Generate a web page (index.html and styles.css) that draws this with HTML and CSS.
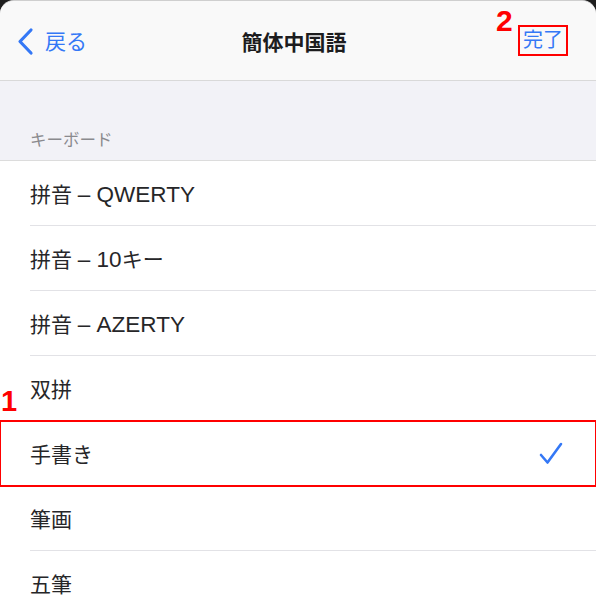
FILE: index.html
```html
<!DOCTYPE html>
<html lang="ja">
<head>
  <meta charset="UTF-8" />
  <title>簡体中国語</title>
  <link rel="stylesheet" href="styles.css">
</head>
<body>
  <!-- Sheet with rounded top corners -->
  <div class="sheet">
    <!-- Navigation bar -->
    <div class="navbar">
      <a class="nav-back">
        <svg class="chevron" width="20" height="30" viewBox="0 0 20 30">
          <polyline points="15,4 4,15.5 15,27" fill="none" stroke="#3478f6" stroke-width="3.2" stroke-linecap="round" stroke-linejoin="round"/>
        </svg>
        <span>戻る</span>
      </a>
      <div class="nav-title">簡体中国語</div>
      <div class="nav-right">
        <a class="nav-done">完了</a>
      </div>
      <span class="step step-2">2</span>
    </div>

    <!-- Section header -->
    <div class="section-header">キーボード</div>

    <!-- Keyboard list -->
    <div class="list">
      <div class="row"><div class="row-inner"><span>拼音 <span class="latin">– QWERTY</span></span></div></div>
      <div class="row"><div class="row-inner"><span>拼音 <span class="latin">– 10</span>キー</span></div></div>
      <div class="row"><div class="row-inner"><span>拼音 <span class="latin">– AZERTY</span></span></div></div>
      <div class="row"><div class="row-inner">双拼</div></div>
      <div class="row selected">
        <span class="step step-1">1</span>
        <div class="row-inner">
          <span>手書き</span>
          <svg class="check" width="26" height="26" viewBox="0 0 26 26">
            <polyline points="3,14 9.5,21.5 23,3" fill="none" stroke="#3478f6" stroke-width="2.6" stroke-linecap="round" stroke-linejoin="round"/>
          </svg>
        </div>
      </div>
      <div class="row"><div class="row-inner">筆画</div></div>
      <div class="row"><div class="row-inner">五筆</div></div>
    </div>
  </div>
</body>
</html>
```

FILE: styles.css
```css
/* Dark backdrop behind the sheet */
body {
  margin: 0;
  background: #1e1e1e;
  font-family: "Liberation Sans", "Noto Sans CJK JP", sans-serif;
  width: 596px;
  height: 610px;
  overflow: hidden;
}

/* Sheet card */
.sheet {
  background: #f2f2f7;
  border-radius: 14px 14px 0 0;
  height: 610px;
  overflow: hidden;
  position: relative;
  border-top: 1px solid #cfcfcf;
  box-sizing: border-box;
}

/* Top navigation */
.navbar {
  height: 79px;
  background: #f9f9f9;
  border-bottom: 1px solid #d9d9d9;
  display: flex;
  align-items: center;
  justify-content: space-between;
  padding: 0 28px 0 16px;
  position: relative;
}

.nav-back {
  display: flex;
  align-items: center;
  gap: 9px;
  color: #3478f6;
  font-size: 21px;
  width: 150px;
}

.nav-back span {
  margin-top: -1px;
}

.nav-title {
  font-size: 21px;
  font-weight: bold;
  color: #1c1c1e;
  margin-left: 4px;
}

.nav-right {
  width: 150px;
  display: flex;
  justify-content: flex-end;
}

/* Done button, boxed in red as annotation */
.nav-done {
  color: #3478f6;
  font-size: 20px;
  line-height: 27px;
  padding: 0 3px;
  border: 2px solid #f00;
  margin-top: -1px;
}

/* Red step numbers */
.step {
  position: absolute;
  color: #f00;
  font-family: "Liberation Sans", Arial, sans-serif;
  font-weight: bold;
  font-size: 30px;
  line-height: 1;
}

.step-2 {
  left: 496px;
  top: 5px;
}

.step-1 {
  left: 1px;
  top: -34px;
  font-size: 29px;
}

/* Section header */
.section-header {
  height: 80px;
  box-sizing: border-box;
  padding: 46px 0 0 30px;
  font-size: 16.5px;
  color: #8a8a8e;
  border-bottom: 1px solid #dcdcdc;
}

/* List rows */
.list {
  background: #fff;
}

.row {
  position: relative;
  height: 65px;
}

.row-inner {
  margin-left: 30px;
  height: 64px;
  border-bottom: 1px solid #e2e2e6;
  display: flex;
  align-items: center;
  justify-content: space-between;
  padding-right: 32px;
  font-size: 21px;
  color: #262628;
}

/* Latin part of row labels is set slightly larger */
.latin {
  font-size: 22.5px;
}

.row.selected {
  outline: 2px solid #f00;
  outline-offset: -1px;
  z-index: 1;
}

.row.selected .row-inner {
  border-bottom-color: #fff;
}

.check {
  margin-top: 2px;
}
```
